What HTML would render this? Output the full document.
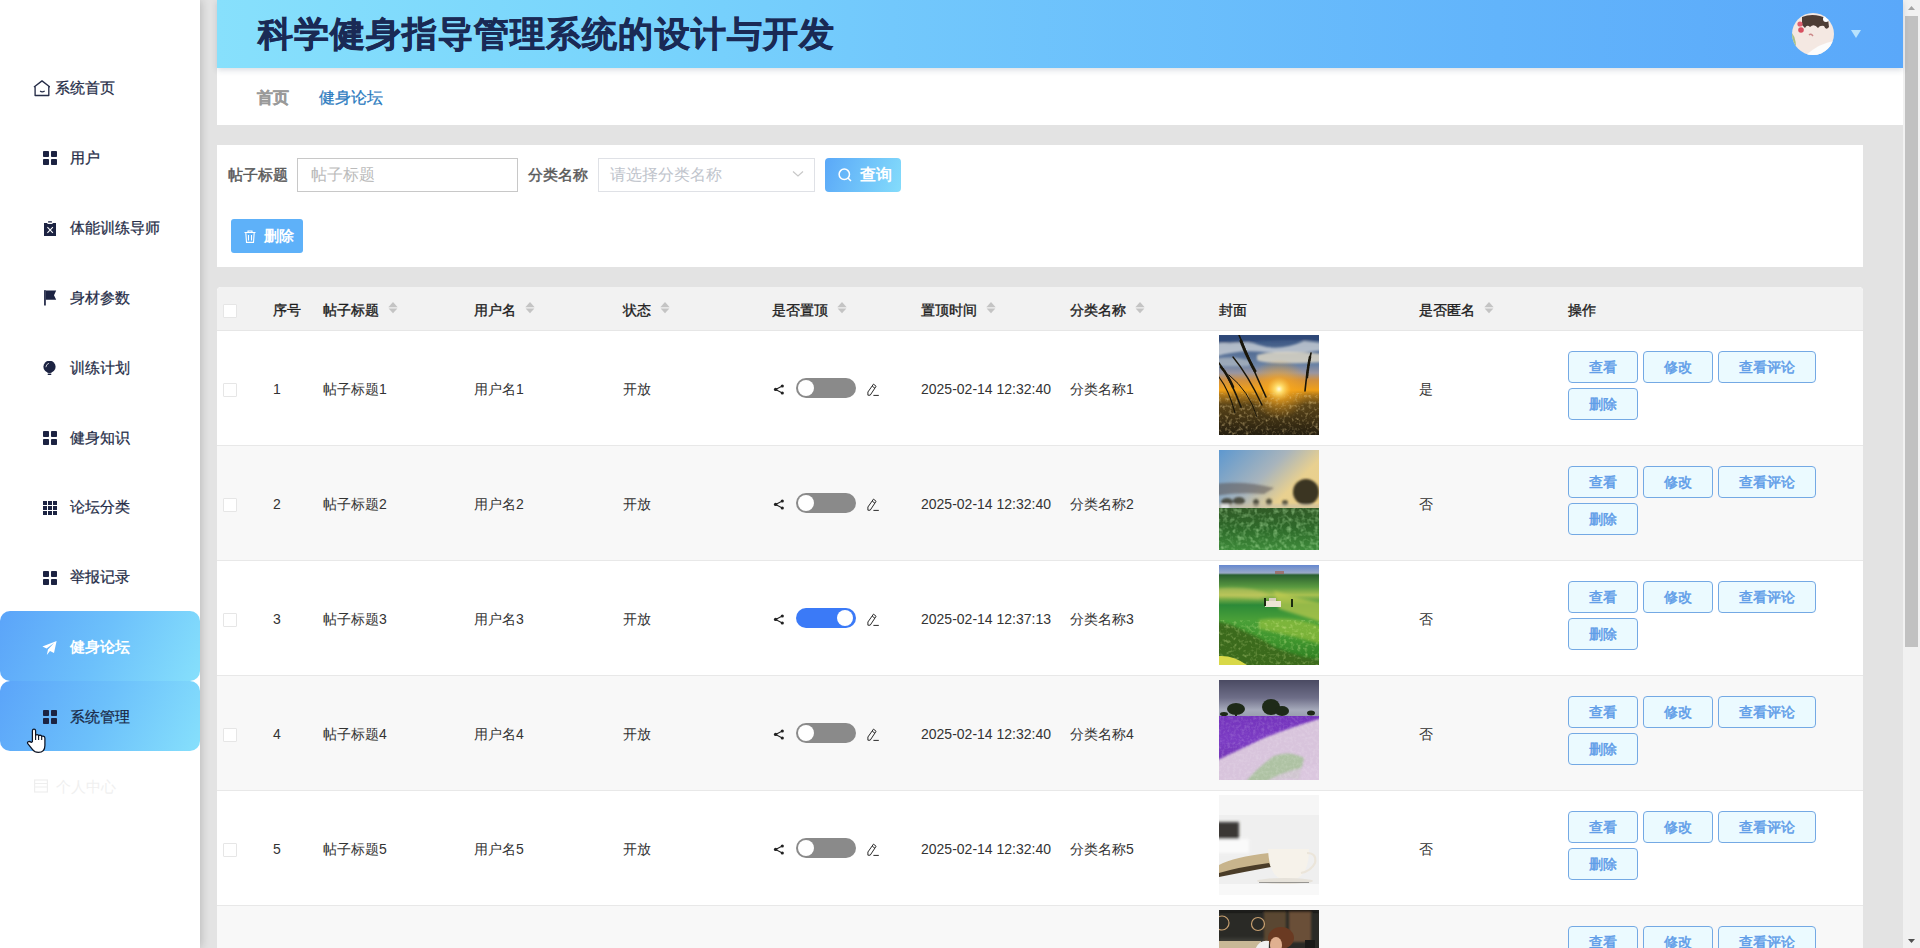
<!DOCTYPE html>
<html><head><meta charset="utf-8">
<style>
*{box-sizing:border-box;margin:0;padding:0}
html,body{width:1920px;height:948px;overflow:hidden}
body{position:relative;background:#e3e3e3;font-family:"Liberation Sans",sans-serif;color:#333}
.abs{position:absolute}
#side{position:absolute;left:0;top:0;width:200px;height:948px;background:#fff;box-shadow:1px 0 9px rgba(0,0,0,.2);z-index:5}
.mi{position:absolute;left:0;width:200px;height:69.87px;font-size:15px;color:#262d48;line-height:69px;white-space:nowrap}
.mi .ic{position:absolute;left:43px;top:var(--ico,28px);width:14px;height:14px}
.mi .ic.home{left:33px;top:25.8px;width:17px;height:17px}
.mi .tx{-webkit-text-stroke:0.25px currentColor}
.mi .tx{position:absolute;left:70px;top:1px}
.mi.act,.mi.hov{background:linear-gradient(115deg,#5ba4f9 0%,#6cc0fb 50%,#86e0fc 100%);border-radius:10px}
.mi.act .tx{color:#fff;font-weight:bold;-webkit-text-stroke:0}
.mi.hov .tx{color:#1a2a48}
.mi.ghost .tx{color:#f0f0f0;-webkit-text-stroke:0}
#hdr{position:absolute;left:217px;top:0;width:1686px;height:68px;background:linear-gradient(90deg,#87e0fc 0%,#78d4fc 25%,#72c8fc 40%,#62b4fb 76%,#5aa8fa 100%);box-shadow:0 2px 6px rgba(40,60,90,.18);z-index:3}
#title{position:absolute;left:41px;top:10px;font-size:35px;letter-spacing:1.05px;font-weight:bold;color:#1a2a55;line-height:48px;-webkit-text-stroke:0.6px #1a2a55}
#avatar{position:absolute;left:1575px;top:13px;width:42px;height:42px;border-radius:50%;overflow:hidden}
#caret{position:absolute;left:1634px;top:30px;width:0;height:0;border-left:5px solid transparent;border-right:5px solid transparent;border-top:8px solid #b8e2fd}
#crumb{position:absolute;left:217px;top:68px;width:1686px;height:57px;background:#fff}
#crumb span{position:absolute;top:20px;font-size:16px;line-height:20px}
#scroll{position:absolute;left:1903px;top:0;width:17px;height:948px;background:#f1f1f1}
#thumb{position:absolute;left:2px;top:16px;width:13px;height:631px;background:#c1c1c1}
.card{position:absolute;left:217px;width:1646px;background:#fff}
.lab{position:absolute;top:20px;font-size:15px;line-height:20px;color:#5a5a5a;-webkit-text-stroke:0.45px #5a5a5a}
.inp{position:absolute;top:13px;height:34px;border:1px solid #c8c8c8;font-size:16px;line-height:31px;color:#bbb;padding-left:13px}
.btnq{position:absolute;left:608px;top:13px;width:76px;height:34px;border-radius:4px;background:linear-gradient(110deg,#5aa8f8,#84dcfb);color:#fff;font-weight:bold;font-size:16px;line-height:34px}
.btnd{position:absolute;left:14px;top:74px;width:72px;height:34px;border-radius:3px;background:#5eb1f9;color:#fff;font-weight:bold;font-size:15px;line-height:34px}
.th{position:absolute;top:13px;font-size:14px;line-height:20px;color:#1c1c1c;-webkit-text-stroke:0.35px #1c1c1c;white-space:nowrap}
.th .sort{position:absolute;right:-19px;top:2px;width:10px;height:12px;-webkit-text-stroke:0}
.thead{position:absolute;left:0;top:0;width:1646px;height:44px;background:#f2f2f2;border-bottom:1px solid #e6e6e6;border-radius:4px 4px 0 0}
.cb{position:absolute;width:14px;height:14px;border:1px solid #e6e6e6;background:#fff;border-radius:1px}
.tr{position:absolute;left:0;width:1646px;height:115px;border-bottom:1px solid #e8e8e8}
.td{position:absolute;top:47.5px;font-size:14px;line-height:20px;color:#333;white-space:nowrap}
.topc{position:absolute;top:47px;height:20px;width:120px}
.share{position:absolute;left:1px;top:5px;width:12px;height:12px}
.sw{position:absolute;left:24px;top:0px;width:60px;height:20px;border-radius:10px;background:#8a8a8a}
.sw i{position:absolute;left:2px;top:2px;width:16px;height:16px;border-radius:50%;background:#fff}
.sw.on{background:#3b7af7}
.sw.on i{left:41px}
.pen{position:absolute;left:94px;top:5px;width:13px;height:13px}
.imgw{position:absolute;top:4px;width:100px;height:100px;overflow:hidden}
.cover{width:100px;height:100px;display:block}
.ops{position:absolute;top:20px;width:260px;height:70px}
.ob{position:absolute;height:32px;border:1px solid #74a9e4;border-radius:4px;background:#ebfaff;color:#5f9de8;font-size:14px;line-height:30px;text-align:center;-webkit-text-stroke:0.5px #5f9de8}
</style></head><body>
<div id="side"><div class="mi" style="top:53.80px"><svg class="ic home" viewBox="0 0 17 17"><path d="M1.4 6.7 L9 0.9 L16.6 6.7 M2.1 6.4 V15.5 H15.8 V6.4" fill="none" stroke="#262d48" stroke-width="1.35" stroke-linejoin="round" stroke-linecap="round"/><path d="M7.1 11 Q9 12.6 11.7 11" fill="none" stroke="#262d48" stroke-width="1.2"/></svg><span class="tx" style="left:55px;top:-0.6px">系统首页</span></div><div class="mi" style="top:123.48px;--ico:27.80px"><svg class="ic" viewBox="0 0 14 14"><rect x="0" y="0" width="6" height="6" rx="0.8" fill="#1c2342"/><rect x="8" y="0" width="6" height="6" rx="0.8" fill="#1c2342"/><rect x="0" y="8" width="6" height="6" rx="0.8" fill="#1c2342"/><rect x="8" y="8" width="6" height="6" rx="0.8" fill="#1c2342"/></svg><span class="tx" style="top:-0.40px">用户</span></div><div class="mi" style="top:193.16px;--ico:28.00px"><svg class="ic" viewBox="0 0 14 15" style="height:15px"><path d="M1 1.9 H4.1 L4.8 2.9 H9.2 L9.9 1.9 H13 V14.9 H1 Z" fill="#1c2342"/><rect x="5" y="0.2" width="4" height="1.2" rx="0.5" fill="#1c2342"/><path d="M4.4 6.1 L9.9 11.8 M9.9 6.1 L4.4 11.8" stroke="#fff" stroke-width="1.05"/></svg><span class="tx" style="top:-0.20px">体能训练导师</span></div><div class="mi" style="top:262.84px;--ico:28.20px"><svg class="ic" viewBox="0 0 14 16" style="height:16px;top:27.5px"><rect x="1.1" y="0" width="1.7" height="15.6" rx="0.4" fill="#1c2342"/><path d="M2.8 0.6 H13.2 L11 5.3 L13.2 9.8 H2.8 Z" fill="#1c2342"/></svg><span class="tx" style="top:0.00px">身材参数</span></div><div class="mi" style="top:332.52px;--ico:28.40px"><svg class="ic" viewBox="0 0 14 16" style="height:16px;top:28px"><circle cx="6.5" cy="5.8" r="6.1" fill="#1c2342"/><path d="M3.2 9.4 L4.7 11.7 H8.3 L9.8 9.4 Z" fill="#1c2342"/><rect x="4.6" y="12.6" width="3.8" height="1.3" rx="0.65" fill="#1c2342"/><path d="M2.9 6.2 Q3.1 3.2 5.9 2.3" fill="none" stroke="#fff" stroke-width="0.9" opacity=".85"/></svg><span class="tx" style="top:0.20px">训练计划</span></div><div class="mi" style="top:402.20px;--ico:28.60px"><svg class="ic" viewBox="0 0 14 14"><rect x="0" y="0" width="6" height="6" rx="0.8" fill="#1c2342"/><rect x="8" y="0" width="6" height="6" rx="0.8" fill="#1c2342"/><rect x="0" y="8" width="6" height="6" rx="0.8" fill="#1c2342"/><rect x="8" y="8" width="6" height="6" rx="0.8" fill="#1c2342"/></svg><span class="tx" style="top:0.40px">健身知识</span></div><div class="mi" style="top:471.88px;--ico:28.80px"><svg class="ic" viewBox="0 0 14 14"><rect x="0" y="0" width="4" height="4" fill="#1c2342"/><rect x="5" y="0" width="4" height="4" fill="#1c2342"/><rect x="10" y="0" width="4" height="4" fill="#1c2342"/><rect x="0" y="5" width="4" height="4" fill="#1c2342"/><rect x="5" y="5" width="4" height="4" fill="#1c2342"/><rect x="10" y="5" width="4" height="4" fill="#1c2342"/><rect x="0" y="10" width="4" height="4" fill="#1c2342"/><rect x="5" y="10" width="4" height="4" fill="#1c2342"/><rect x="10" y="10" width="4" height="4" fill="#1c2342"/></svg><span class="tx" style="top:0.60px">论坛分类</span></div><div class="mi" style="top:541.56px;--ico:29.00px"><svg class="ic" viewBox="0 0 14 14"><rect x="0" y="0" width="6" height="6" rx="0.8" fill="#1c2342"/><rect x="8" y="0" width="6" height="6" rx="0.8" fill="#1c2342"/><rect x="0" y="8" width="6" height="6" rx="0.8" fill="#1c2342"/><rect x="8" y="8" width="6" height="6" rx="0.8" fill="#1c2342"/></svg><span class="tx" style="top:0.80px">举报记录</span></div><div class="mi act" style="top:611.24px;--ico:29.20px"><svg class="ic" style="left:42px;top:29px;width:15px;height:16px" viewBox="0 0 15 15"><path d="M14.6 0.4 L0.4 6 L4.6 8 L12 2.6 L6 9 L4.8 14.4 L8 10.6 L12 12.6 Z" fill="#fff"/></svg><span class="tx" style="top:1.00px">健身论坛</span></div><div class="mi hov" style="top:680.92px;--ico:29.40px"><svg class="ic" viewBox="0 0 14 14"><rect x="0" y="0" width="6" height="6" rx="0.8" fill="#1c2342"/><rect x="8" y="0" width="6" height="6" rx="0.8" fill="#1c2342"/><rect x="0" y="8" width="6" height="6" rx="0.8" fill="#1c2342"/><rect x="8" y="8" width="6" height="6" rx="0.8" fill="#1c2342"/></svg><span class="tx" style="top:1.20px">系统管理</span></div><div class="mi ghost" style="top:750.60px"><svg class="ic" style="left:34px" viewBox="0 0 14 14"><rect x="0.6" y="1" width="12.8" height="12" fill="none" stroke="#eee" stroke-width="1.2"/><path d="M0.6 4.5 H13.4 M0.6 8 H13.4" stroke="#eee" stroke-width="1.2"/></svg><span class="tx" style="left:56px">个人中心</span></div></div>
<svg class="abs" style="left:26px;top:728px;width:20px;height:26px;z-index:9" viewBox="0 0 20 26"><path d="M6.4 13.8 V2.8 Q6.4 1.1 8 1.1 Q9.6 1.1 9.6 2.8 V7.5 Q9.8 6.5 11.2 6.5 Q12.6 6.5 12.6 7.8 Q12.9 7.2 14.2 7.2 Q15.6 7.3 15.7 8.5 Q16 8 17.2 8.2 Q18.9 8.5 18.9 10 V17.5 Q18.9 24.4 12.4 24.4 Q8.6 24.4 6.6 21.6 L1.8 15.6 Q1 14.4 2.2 13.8 Q3.8 13 5.2 14.4 Z" fill="#fff" stroke="#0d1424" stroke-width="1.25" stroke-linejoin="round"/><path d="M9.6 7.5 V12 M12.6 7.8 V12 M15.7 8.5 V12" stroke="#0d1424" stroke-width="1.1"/></svg>
<div id="hdr"><div id="title">科学健身指导管理系统的设计与开发</div>
<div id="avatar"><svg width="42" height="42" viewBox="0 0 42 42"><defs><filter id="ab"><feGaussianBlur stdDeviation="0.6"/></filter></defs><rect width="42" height="42" fill="#f4e8e2"/><g filter="url(#ab)"><path d="M10 4 Q22 -1 36 6 L37 14 Q34 18 32 13 Q28 12 26 15 Q22 10 18 14 Q15 11 13 15 L10 12Z" fill="#4e3c36"/><circle cx="8" cy="11" r="2.6" fill="#e06070"/><circle cx="9" cy="17" r="2.8" fill="#d85060"/><path d="M0 20 Q5 26 4 42 H0Z" fill="#a8c088"/><path d="M14 42 Q28 30 42 28 V42Z" fill="#fcfcfc"/><path d="M17 22 Q19 20 21 23" stroke="#c88" stroke-width="1.4" fill="none"/><circle cx="34" cy="6" r="3" fill="#fff"/></g></svg></div>
<div id="caret"></div>
</div>
<div id="crumb"><span style="left:40px;color:#9a9a9a;font-weight:bold;-webkit-text-stroke:0.35px #9a9a9a">首页</span><span style="left:102px;color:#2b7bc0;-webkit-text-stroke:0.25px #2b7bc0">健身论坛</span></div>
<div class="card" style="top:145px;height:122px">
  <div class="lab" style="left:11px">帖子标题</div>
  <div class="inp" style="left:80px;width:221px">帖子标题</div>
  <div class="lab" style="left:311px">分类名称</div>
  <div class="inp" style="left:381px;width:217px;border-color:#dfe1e6;padding-left:11px;color:#c0c4cc">请选择分类名称<svg style="position:absolute;right:10px;top:11px;width:12px;height:8px" viewBox="0 0 12 8"><path d="M1 1.5 L6 6 L11 1.5" fill="none" stroke="#c8c8c8" stroke-width="1.2"/></svg></div>
  <div class="btnq"><svg style="position:absolute;left:13px;top:10px;width:14px;height:14px" viewBox="0 0 14 14"><circle cx="6.3" cy="6.3" r="5.2" fill="none" stroke="#fff" stroke-width="1.5"/><path d="M10 10 L13 13" stroke="#fff" stroke-width="1.5"/></svg><span style="position:absolute;left:35px;top:0">查询</span></div>
  <div class="btnd"><svg style="position:absolute;left:13px;top:11px;width:12px;height:13px" viewBox="0 0 12 13"><path d="M0.5 2.5 H11.5 M4 2.5 V1 H8 V2.5 M1.8 2.5 L2.5 12.4 H9.5 L10.2 2.5 M4.5 5 V10.5 M7.5 5 V10.5" fill="none" stroke="#fff" stroke-width="1.1"/></svg><span style="position:absolute;left:33px;top:0">删除</span></div>
</div>
<div class="card" style="top:287px;height:661px;border-radius:4px 4px 0 0;overflow:hidden">
<div class="thead"><div class="cb" style="left:6px;top:17px"></div><div class="th" style="left:56px">序号</div><div class="th" style="left:106px">帖子标题<svg class="sort" viewBox="0 0 10 12"><path d="M0.3 5.2 L5 0 L9.7 5.2 Z" fill="#c4c4c4"/><path d="M0.6 6.5 L5 11.2 L9.4 6.5 Z" fill="#c4c4c4"/></svg></div><div class="th" style="left:257px">用户名<svg class="sort" viewBox="0 0 10 12"><path d="M0.3 5.2 L5 0 L9.7 5.2 Z" fill="#c4c4c4"/><path d="M0.6 6.5 L5 11.2 L9.4 6.5 Z" fill="#c4c4c4"/></svg></div><div class="th" style="left:406px">状态<svg class="sort" viewBox="0 0 10 12"><path d="M0.3 5.2 L5 0 L9.7 5.2 Z" fill="#c4c4c4"/><path d="M0.6 6.5 L5 11.2 L9.4 6.5 Z" fill="#c4c4c4"/></svg></div><div class="th" style="left:555px">是否置顶<svg class="sort" viewBox="0 0 10 12"><path d="M0.3 5.2 L5 0 L9.7 5.2 Z" fill="#c4c4c4"/><path d="M0.6 6.5 L5 11.2 L9.4 6.5 Z" fill="#c4c4c4"/></svg></div><div class="th" style="left:704px">置顶时间<svg class="sort" viewBox="0 0 10 12"><path d="M0.3 5.2 L5 0 L9.7 5.2 Z" fill="#c4c4c4"/><path d="M0.6 6.5 L5 11.2 L9.4 6.5 Z" fill="#c4c4c4"/></svg></div><div class="th" style="left:853px">分类名称<svg class="sort" viewBox="0 0 10 12"><path d="M0.3 5.2 L5 0 L9.7 5.2 Z" fill="#c4c4c4"/><path d="M0.6 6.5 L5 11.2 L9.4 6.5 Z" fill="#c4c4c4"/></svg></div><div class="th" style="left:1002px">封面</div><div class="th" style="left:1202px">是否匿名<svg class="sort" viewBox="0 0 10 12"><path d="M0.3 5.2 L5 0 L9.7 5.2 Z" fill="#c4c4c4"/><path d="M0.6 6.5 L5 11.2 L9.4 6.5 Z" fill="#c4c4c4"/></svg></div><div class="th" style="left:1351px">操作</div></div>
<div class="tr" style="top:44px;background:#fff"><div class="cb" style="left:6px;top:52px"></div><div class="td" style="left:56px">1</div><div class="td" style="left:106px">帖子标题1</div><div class="td" style="left:257px">用户名1</div><div class="td" style="left:406px">开放</div><div class="td" style="left:704px">2025-02-14 12:32:40</div><div class="td" style="left:853px">分类名称1</div><div class="td" style="left:1202px">是</div><div class="topc" style="left:555px"><svg class="share" viewBox="0 0 12 12"><circle cx="9.3" cy="3" r="1.6" fill="#222"/><circle cx="2.6" cy="6.4" r="1.7" fill="#222"/><circle cx="9.3" cy="10" r="1.6" fill="#222"/><path d="M9.3 3 L2.6 6.4 L9.3 10" fill="none" stroke="#222" stroke-width="1.1"/></svg><div class="sw"><i></i></div><svg class="pen" viewBox="0 0 13 13"><path d="M1.9 12.2 L1.9 9 L7.5 1.1 L10.1 3.3 L4.2 12.2 Z M6.2 3.1 L8.9 5.2" fill="none" stroke="#2a2a2a" stroke-width="1" stroke-linejoin="round"/><path d="M7.4 12.4 H12.8" stroke="#2a2a2a" stroke-width="1"/></svg></div><div class="imgw" style="left:1002px"><svg class="cover" viewBox="0 0 100 100" preserveAspectRatio="none"><defs>
<linearGradient id="g0" x1="0" y1="0" x2="0" y2="1"><stop offset="0" stop-color="#34507e"/><stop offset="0.3" stop-color="#6a82a4"/><stop offset="0.38" stop-color="#9a96a0"/><stop offset="0.45" stop-color="#d09040"/><stop offset="0.55" stop-color="#f0a018"/><stop offset="0.6" stop-color="#b07818"/><stop offset="0.7" stop-color="#5a4418"/><stop offset="1" stop-color="#241e10"/></linearGradient>
<radialGradient id="s0" cx="0.6" cy="0.54" r="0.3"><stop offset="0" stop-color="#fffbe0"/><stop offset="0.12" stop-color="#ffe070"/><stop offset="0.4" stop-color="#f8a820" stop-opacity=".6"/><stop offset="1" stop-color="#f0a020" stop-opacity="0"/></radialGradient>
<filter id="b0" x="-10%" y="-10%" width="120%" height="120%"><feGaussianBlur stdDeviation="1.2"/></filter>
<filter id="n0" x="0" y="0" width="100%" height="100%"><feTurbulence type="fractalNoise" baseFrequency="0.3" numOctaves="2" seed="7" result="n"/><feColorMatrix in="n" values="0 0 0 0 0.85  0 0 0 0 0.65  0 0 0 0 0.3  2 0 0 0 -1"/><feComposite in2="SourceGraphic" operator="in"/></filter></defs>
<rect width="100" height="100" fill="url(#g0)"/>
<g filter="url(#b0)"><path d="M-5 9 Q20 3 40 10 T85 6 L105 8 V15 Q70 20 45 17 T-5 22Z" fill="#d4d8dc" opacity=".75"/><path d="M38 20 Q60 14 105 19 V27 Q72 29 56 28 T38 25Z" fill="#e4dcc8" opacity=".8"/><path d="M-5 24 Q15 20 32 26 L30 31 Q10 32 -5 30Z" fill="#c0c4c8" opacity=".6"/><path d="M-5 0 H105 V6 Q60 4 30 7 T-5 5Z" fill="#2a4474" opacity=".7"/></g>
<rect width="100" height="100" fill="url(#s0)"/>
<rect x="0" y="58" width="100" height="42" fill="#fff" filter="url(#n0)" opacity=".7"/>
<g stroke="#1a160a" fill="none" stroke-linecap="round"><path d="M20 0 Q30 25 47 62" stroke-width="1.6"/><path d="M22 6 Q28 22 36 36" stroke-width="3" stroke-dasharray="1.5 1"/><path d="M14 22 Q29 40 43 70" stroke-width="1.4"/><path d="M0 28 Q12 45 22 72" stroke-width="1.6"/><path d="M2 32 Q9 40 14 52" stroke-width="2.6" stroke-dasharray="1.5 1"/><path d="M0 42 Q10 55 16 78" stroke-width="1.2"/><path d="M92 18 Q88 35 86 56" stroke-width="1.6"/><path d="M91 22 Q89 32 88 42" stroke-width="2.6" stroke-dasharray="1.5 1"/><path d="M10 40 Q30 56 38 82" stroke-width="1"/></g>
</svg></div><div class="ops" style="left:1351px"><span class="ob" style="left:0;top:0;width:70px">查看</span><span class="ob" style="left:75px;top:0;width:70px">修改</span><span class="ob" style="left:150px;top:0;width:98px">查看评论</span><span class="ob" style="left:0;top:37px;width:70px">删除</span></div></div><div class="tr" style="top:159px;background:#f8f8f8"><div class="cb" style="left:6px;top:52px"></div><div class="td" style="left:56px">2</div><div class="td" style="left:106px">帖子标题2</div><div class="td" style="left:257px">用户名2</div><div class="td" style="left:406px">开放</div><div class="td" style="left:704px">2025-02-14 12:32:40</div><div class="td" style="left:853px">分类名称2</div><div class="td" style="left:1202px">否</div><div class="topc" style="left:555px"><svg class="share" viewBox="0 0 12 12"><circle cx="9.3" cy="3" r="1.6" fill="#222"/><circle cx="2.6" cy="6.4" r="1.7" fill="#222"/><circle cx="9.3" cy="10" r="1.6" fill="#222"/><path d="M9.3 3 L2.6 6.4 L9.3 10" fill="none" stroke="#222" stroke-width="1.1"/></svg><div class="sw"><i></i></div><svg class="pen" viewBox="0 0 13 13"><path d="M1.9 12.2 L1.9 9 L7.5 1.1 L10.1 3.3 L4.2 12.2 Z M6.2 3.1 L8.9 5.2" fill="none" stroke="#2a2a2a" stroke-width="1" stroke-linejoin="round"/><path d="M7.4 12.4 H12.8" stroke="#2a2a2a" stroke-width="1"/></svg></div><div class="imgw" style="left:1002px"><svg class="cover" viewBox="0 0 100 100" preserveAspectRatio="none"><defs>
<linearGradient id="g1" x1="0" y1="0" x2="1" y2="1"><stop offset="0" stop-color="#5d98d0"/><stop offset="0.35" stop-color="#a8b4bc"/><stop offset="0.55" stop-color="#e8d090"/><stop offset="1" stop-color="#f0d080"/></linearGradient>
<linearGradient id="f1" x1="0" y1="0" x2="0" y2="1"><stop offset="0" stop-color="#305a26"/><stop offset="0.5" stop-color="#2e6a2a"/><stop offset="1" stop-color="#3e8a3a"/></linearGradient>
<filter id="b1" x="-10%" y="-10%" width="120%" height="120%"><feGaussianBlur stdDeviation="1"/></filter>
<filter id="n1" x="0" y="0" width="100%" height="100%"><feTurbulence type="fractalNoise" baseFrequency="0.22" numOctaves="2" seed="3" result="n"/><feColorMatrix in="n" values="0 0 0 0 0.6  0 0 0 0 1  0 0 0 0 0.5  1.8 0 0 0 -0.8"/><feComposite in2="SourceGraphic" operator="in"/></filter></defs>
<rect width="100" height="100" fill="url(#g1)"/>
<g filter="url(#b1)"><path d="M-5 34 Q25 30 55 38 L45 44 Q20 42 -5 46Z" fill="#5a5454" opacity=".55"/><ellipse cx="87" cy="42" rx="13" ry="13" fill="#3a3420"/><g fill="#3c3c30" opacity=".85"><ellipse cx="8" cy="52" rx="6" ry="4"/><ellipse cx="20" cy="51" rx="6" ry="4"/><ellipse cx="37" cy="53" rx="3" ry="4"/><ellipse cx="50" cy="52" rx="3" ry="3.5"/><ellipse cx="66" cy="53" rx="3" ry="3"/></g><rect x="-5" y="54" width="110" height="5" fill="#c8c0a8" opacity=".6"/><rect x="2" y="54" width="8" height="5" fill="#f0f0f0" opacity=".8"/></g>
<rect x="0" y="58" width="100" height="42" fill="url(#f1)"/>
<rect x="0" y="58" width="100" height="42" fill="#fff" filter="url(#n1)" opacity=".6"/>
</svg></div><div class="ops" style="left:1351px"><span class="ob" style="left:0;top:0;width:70px">查看</span><span class="ob" style="left:75px;top:0;width:70px">修改</span><span class="ob" style="left:150px;top:0;width:98px">查看评论</span><span class="ob" style="left:0;top:37px;width:70px">删除</span></div></div><div class="tr" style="top:274px;background:#fff"><div class="cb" style="left:6px;top:52px"></div><div class="td" style="left:56px">3</div><div class="td" style="left:106px">帖子标题3</div><div class="td" style="left:257px">用户名3</div><div class="td" style="left:406px">开放</div><div class="td" style="left:704px">2025-02-14 12:37:13</div><div class="td" style="left:853px">分类名称3</div><div class="td" style="left:1202px">否</div><div class="topc" style="left:555px"><svg class="share" viewBox="0 0 12 12"><circle cx="9.3" cy="3" r="1.6" fill="#222"/><circle cx="2.6" cy="6.4" r="1.7" fill="#222"/><circle cx="9.3" cy="10" r="1.6" fill="#222"/><path d="M9.3 3 L2.6 6.4 L9.3 10" fill="none" stroke="#222" stroke-width="1.1"/></svg><div class="sw on"><i></i></div><svg class="pen" viewBox="0 0 13 13"><path d="M1.9 12.2 L1.9 9 L7.5 1.1 L10.1 3.3 L4.2 12.2 Z M6.2 3.1 L8.9 5.2" fill="none" stroke="#2a2a2a" stroke-width="1" stroke-linejoin="round"/><path d="M7.4 12.4 H12.8" stroke="#2a2a2a" stroke-width="1"/></svg></div><div class="imgw" style="left:1002px"><svg class="cover" viewBox="0 0 100 100" preserveAspectRatio="none"><defs>
<linearGradient id="g2" x1="0" y1="0" x2="0" y2="1"><stop offset="0" stop-color="#6688d0"/><stop offset="0.08" stop-color="#9aaac8"/><stop offset="0.1" stop-color="#2a6030"/><stop offset="0.22" stop-color="#5a9a40"/><stop offset="0.3" stop-color="#a8c050"/><stop offset="0.4" stop-color="#2c8a38"/><stop offset="0.55" stop-color="#4aa038"/><stop offset="0.75" stop-color="#40962e"/><stop offset="1" stop-color="#2a7a20"/></linearGradient>
<filter id="b2" x="-10%" y="-10%" width="120%" height="120%"><feGaussianBlur stdDeviation="1.4"/></filter>
<filter id="n2" x="0" y="0" width="100%" height="100%"><feTurbulence type="fractalNoise" baseFrequency="0.28" numOctaves="2" seed="11" result="n"/><feColorMatrix in="n" values="0 0 0 0 0.85  0 0 0 0 1  0 0 0 0 0.4  1.7 0 0 0 -0.85"/><feComposite in2="SourceGraphic" operator="in"/></filter></defs>
<rect width="100" height="100" fill="url(#g2)"/>
<g filter="url(#b2)"><path d="M-5 24 Q30 20 50 30 L40 34 Q20 32 -5 32Z" fill="#c8c860" opacity=".55"/><path d="M55 26 Q80 34 105 38 V58 Q80 50 60 44Z" fill="#c0cc50" opacity=".7"/><path d="M40 55 Q70 50 105 62 V80 Q70 70 40 64Z" fill="#a8c840" opacity=".55"/></g>
<rect x="46" y="36" width="16" height="6" fill="#ece4d4"/><rect x="50" y="33" width="7" height="3" fill="#d8cfc0"/><rect x="45" y="33" width="2" height="8" fill="#1a2a10"/><rect x="72" y="34" width="2" height="8" fill="#1a2a10"/><rect x="56" y="6" width="9" height="3" fill="#a06050" opacity=".7"/>
<path d="M-5 56 Q10 58 25 66 Q40 72 55 82 Q70 88 85 92 L105 95 V105 H-5Z" fill="#3a6a1a" filter="url(#b2)"/>
<rect x="0" y="55" width="100" height="45" fill="#fff" filter="url(#n2)" opacity=".55"/>
<path d="M0 91 Q14 90 28 100 H0Z" fill="#d8d848"/>
</svg></div><div class="ops" style="left:1351px"><span class="ob" style="left:0;top:0;width:70px">查看</span><span class="ob" style="left:75px;top:0;width:70px">修改</span><span class="ob" style="left:150px;top:0;width:98px">查看评论</span><span class="ob" style="left:0;top:37px;width:70px">删除</span></div></div><div class="tr" style="top:389px;background:#f8f8f8"><div class="cb" style="left:6px;top:52px"></div><div class="td" style="left:56px">4</div><div class="td" style="left:106px">帖子标题4</div><div class="td" style="left:257px">用户名4</div><div class="td" style="left:406px">开放</div><div class="td" style="left:704px">2025-02-14 12:32:40</div><div class="td" style="left:853px">分类名称4</div><div class="td" style="left:1202px">否</div><div class="topc" style="left:555px"><svg class="share" viewBox="0 0 12 12"><circle cx="9.3" cy="3" r="1.6" fill="#222"/><circle cx="2.6" cy="6.4" r="1.7" fill="#222"/><circle cx="9.3" cy="10" r="1.6" fill="#222"/><path d="M9.3 3 L2.6 6.4 L9.3 10" fill="none" stroke="#222" stroke-width="1.1"/></svg><div class="sw"><i></i></div><svg class="pen" viewBox="0 0 13 13"><path d="M1.9 12.2 L1.9 9 L7.5 1.1 L10.1 3.3 L4.2 12.2 Z M6.2 3.1 L8.9 5.2" fill="none" stroke="#2a2a2a" stroke-width="1" stroke-linejoin="round"/><path d="M7.4 12.4 H12.8" stroke="#2a2a2a" stroke-width="1"/></svg></div><div class="imgw" style="left:1002px"><svg class="cover" viewBox="0 0 100 100" preserveAspectRatio="none"><defs>
<linearGradient id="g3" x1="0" y1="0" x2="0" y2="1"><stop offset="0" stop-color="#4a4a62"/><stop offset="0.18" stop-color="#6e6e88"/><stop offset="0.3" stop-color="#a6aabb"/><stop offset="0.355" stop-color="#9aa0b0"/><stop offset="0.36" stop-color="#7434bc"/><stop offset="0.6" stop-color="#7c3cc4"/><stop offset="1" stop-color="#6a30a8"/></linearGradient>
<filter id="b3" x="-20%" y="-20%" width="140%" height="140%"><feGaussianBlur stdDeviation="1.3"/></filter>
<filter id="n3" x="0" y="0" width="100%" height="100%"><feTurbulence type="fractalNoise" baseFrequency="0.35" numOctaves="2" seed="3" result="n"/><feColorMatrix in="n" values="0 0 0 0 1  0 0 0 0 1  0 0 0 0 1  1.2 0 0 0 -0.5"/><feComposite in2="SourceGraphic" operator="in"/></filter></defs>
<rect width="100" height="100" fill="url(#g3)"/>
<g fill="#1e2a18"><ellipse cx="17" cy="29" rx="9" ry="6"/><rect x="16" y="29" width="2" height="7"/><ellipse cx="52" cy="27" rx="9" ry="8"/><ellipse cx="63" cy="31" rx="7" ry="5"/><ellipse cx="5" cy="34" rx="4" ry="2"/><ellipse cx="92" cy="33" rx="4" ry="2.5"/></g>
<path d="M-10 110 V84 Q20 70 45 58 Q75 46 110 36 V110Z" fill="#d8c4dc" filter="url(#b3)"/>
<path d="M20 110 Q35 90 55 76 Q70 70 85 78 L80 100 Q60 95 45 110Z" fill="#7cc060" opacity=".45" filter="url(#b3)"/>
<path d="M35 110 Q60 88 110 84 V110Z" fill="#dcc8e0" opacity=".75" filter="url(#b3)"/>
<rect x="0" y="36" width="100" height="64" fill="#fff" filter="url(#n3)" opacity=".3"/>
</svg></div><div class="ops" style="left:1351px"><span class="ob" style="left:0;top:0;width:70px">查看</span><span class="ob" style="left:75px;top:0;width:70px">修改</span><span class="ob" style="left:150px;top:0;width:98px">查看评论</span><span class="ob" style="left:0;top:37px;width:70px">删除</span></div></div><div class="tr" style="top:504px;background:#fff"><div class="cb" style="left:6px;top:52px"></div><div class="td" style="left:56px">5</div><div class="td" style="left:106px">帖子标题5</div><div class="td" style="left:257px">用户名5</div><div class="td" style="left:406px">开放</div><div class="td" style="left:704px">2025-02-14 12:32:40</div><div class="td" style="left:853px">分类名称5</div><div class="td" style="left:1202px">否</div><div class="topc" style="left:555px"><svg class="share" viewBox="0 0 12 12"><circle cx="9.3" cy="3" r="1.6" fill="#222"/><circle cx="2.6" cy="6.4" r="1.7" fill="#222"/><circle cx="9.3" cy="10" r="1.6" fill="#222"/><path d="M9.3 3 L2.6 6.4 L9.3 10" fill="none" stroke="#222" stroke-width="1.1"/></svg><div class="sw"><i></i></div><svg class="pen" viewBox="0 0 13 13"><path d="M1.9 12.2 L1.9 9 L7.5 1.1 L10.1 3.3 L4.2 12.2 Z M6.2 3.1 L8.9 5.2" fill="none" stroke="#2a2a2a" stroke-width="1" stroke-linejoin="round"/><path d="M7.4 12.4 H12.8" stroke="#2a2a2a" stroke-width="1"/></svg></div><div class="imgw" style="left:1002px"><svg class="cover" viewBox="0 0 100 100" preserveAspectRatio="none"><defs><filter id="b4" x="-20%" y="-20%" width="140%" height="140%"><feGaussianBlur stdDeviation="1.6"/></filter></defs>
<rect width="100" height="100" fill="#efefef"/>
<rect x="0" y="0" width="100" height="20" fill="#f6f6f6"/>
<g filter="url(#b4)"><rect x="-4" y="27" width="24" height="17" fill="#3a3836"/><rect x="-4" y="44" width="34" height="14" fill="#fafafa"/></g>
<path d="M0 70 Q15 62 50 58 L52 70 Q30 72 12 78 L0 80Z" fill="#c8b48c"/>
<path d="M0 78 Q20 72 50 68 L52 72 Q30 76 0 82Z" fill="#4a3c28"/>
<path d="M49 54 H90 Q90 80 76 84 H62 Q50 80 49 54Z" fill="#f6f2ea"/>
<path d="M88 58 Q98 58 96 68 Q92 76 82 78" fill="none" stroke="#ebe5da" stroke-width="2.2"/>
<ellipse cx="66" cy="86" rx="28" ry="3" fill="#e6e2da"/><path d="M40 87.5 H90" stroke="#333" stroke-width=".8" opacity=".55"/>
<rect x="0" y="89" width="100" height="11" fill="#f8f8f8"/>
</svg></div><div class="ops" style="left:1351px"><span class="ob" style="left:0;top:0;width:70px">查看</span><span class="ob" style="left:75px;top:0;width:70px">修改</span><span class="ob" style="left:150px;top:0;width:98px">查看评论</span><span class="ob" style="left:0;top:37px;width:70px">删除</span></div></div><div class="tr" style="top:619px;background:#f8f8f8"><div class="cb" style="left:6px;top:52px"></div><div class="td" style="left:56px">6</div><div class="td" style="left:106px">帖子标题6</div><div class="td" style="left:257px">用户名6</div><div class="td" style="left:406px">开放</div><div class="td" style="left:704px">2025-02-14 12:32:40</div><div class="td" style="left:853px">分类名称6</div><div class="td" style="left:1202px">否</div><div class="topc" style="left:555px"><svg class="share" viewBox="0 0 12 12"><circle cx="9.3" cy="3" r="1.6" fill="#222"/><circle cx="2.6" cy="6.4" r="1.7" fill="#222"/><circle cx="9.3" cy="10" r="1.6" fill="#222"/><path d="M9.3 3 L2.6 6.4 L9.3 10" fill="none" stroke="#222" stroke-width="1.1"/></svg><div class="sw"><i></i></div><svg class="pen" viewBox="0 0 13 13"><path d="M1.9 12.2 L1.9 9 L7.5 1.1 L10.1 3.3 L4.2 12.2 Z M6.2 3.1 L8.9 5.2" fill="none" stroke="#2a2a2a" stroke-width="1" stroke-linejoin="round"/><path d="M7.4 12.4 H12.8" stroke="#2a2a2a" stroke-width="1"/></svg></div><div class="imgw" style="left:1002px"><svg class="cover" viewBox="0 0 100 100" preserveAspectRatio="none"><defs><filter id="b5" x="-20%" y="-20%" width="140%" height="140%"><feGaussianBlur stdDeviation="1"/></filter></defs><rect width="100" height="100" fill="#2a2a26"/><g filter="url(#b5)"><rect x="45" y="0" width="22" height="34" fill="#5a4632"/><rect x="70" y="2" width="22" height="30" fill="#6a5038"/><rect x="0" y="0" width="100" height="2" fill="#111"/><rect x="0" y="28" width="45" height="6" fill="#3a3a34"/></g><circle cx="3" cy="13" r="7" fill="none" stroke="#c8a070" stroke-width="1.2"/><circle cx="39" cy="14" r="6.5" fill="none" stroke="#c8a070" stroke-width="1.2"/><rect x="0" y="31" width="42" height="70" fill="#c8b896"/><ellipse cx="62" cy="28" rx="13" ry="11" fill="#6a3a22"/><ellipse cx="57" cy="35" rx="6" ry="8" fill="#e0b090"/><path d="M36 40 Q40 29 50 31 L48 100 H36Z" fill="#f0f0f0"/><rect x="86" y="30" width="10" height="70" fill="#1a1a18"/></svg></div><div class="ops" style="left:1351px"><span class="ob" style="left:0;top:0;width:70px">查看</span><span class="ob" style="left:75px;top:0;width:70px">修改</span><span class="ob" style="left:150px;top:0;width:98px">查看评论</span><span class="ob" style="left:0;top:37px;width:70px">删除</span></div></div>
</div>
<div id="scroll"><svg style="position:absolute;left:5px;top:6px;width:7px;height:4px" viewBox="0 0 7 4"><path d="M0 4 L3.5 0 L7 4Z" fill="#a3a3a3"/></svg><div id="thumb"></div><svg style="position:absolute;left:5px;top:939px;width:7px;height:4px" viewBox="0 0 7 4"><path d="M0 0 L3.5 4 L7 0Z" fill="#505050"/></svg></div>
</body></html>
